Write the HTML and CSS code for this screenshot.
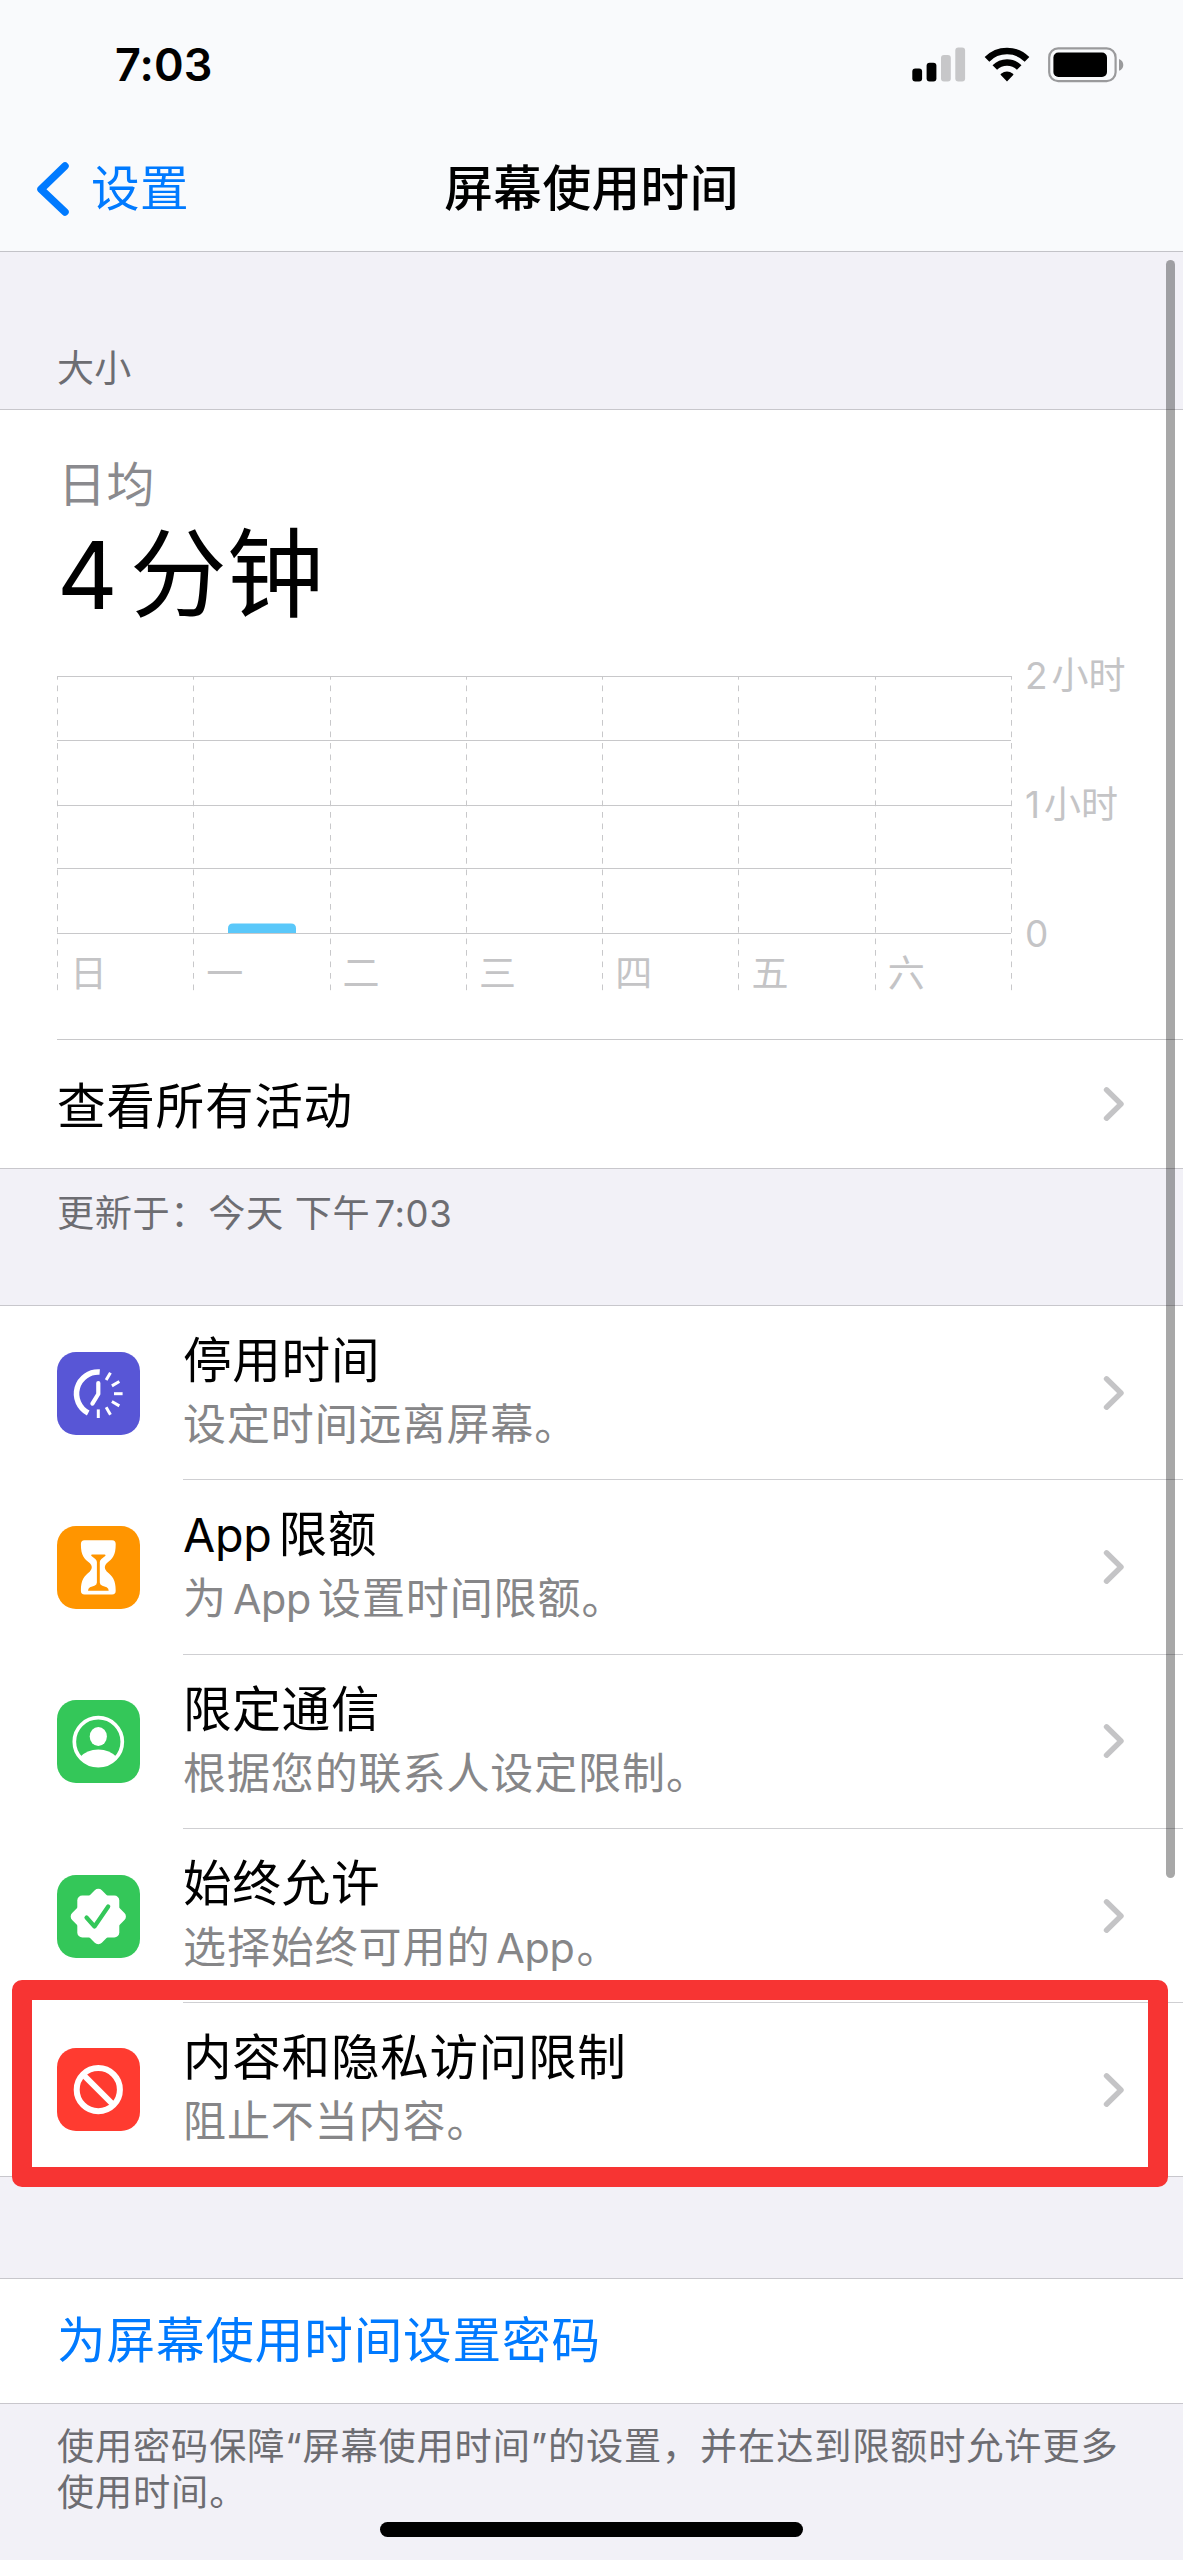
FILE: index.html
```html
<!DOCTYPE html>
<html lang="zh-CN">
<head>
<meta charset="utf-8">
<title>屏幕使用时间</title>
<link rel="stylesheet" href="styles.css">
</head>
<body>
<div class="screen">
  <header class="header">
    <div class="status">
      <span class="status-time">7:03</span>
      <div class="status-icons">
        <svg class="signal" width="54" height="35" viewBox="0 0 54 35">
          <rect x="0.3" y="21.5" width="9.8" height="13" rx="3"/>
          <rect x="14.6" y="15.8" width="9.8" height="18.7" rx="3"/>
          <rect class="off" x="29" y="8" width="9.8" height="26.5" rx="3"/>
          <rect class="off" x="43.3" y="0.5" width="9.8" height="34" rx="3"/>
        </svg>
        <svg class="wifi" width="46" height="35" viewBox="0 0 46 35">
          <path d="M3 12.3a28.2 28.2 0 0 1 40 0" fill="none" stroke="#000" stroke-width="6.6"/>
          <path d="M10.8 20.6a17.2 17.2 0 0 1 24.4 0" fill="none" stroke="#000" stroke-width="6.4"/>
          <path d="M23 34.6l-6.2-6.5q-.7-.8.2-1.4a10 10 0 0 1 12 0q.9.6.2 1.4z"/>
        </svg>
        <svg class="battery" width="76" height="36" viewBox="0 0 76 36">
          <rect x="1.2" y="1.4" width="66.4" height="32.8" rx="9" fill="none" stroke="#9a9a9c" stroke-width="2.2"/>
          <rect x="5.4" y="5.5" width="53.6" height="24.5" rx="5"/>
          <path d="M71 12c2.700 1 4.300 3.300 4.300 5.900s-1.600 4.900-4.300 5.900z" fill="#9a9a9c"/>
        </svg>
      </div>
    </div>
    <nav class="nav">
      <a class="back">
        <svg width="34" height="56" viewBox="0 0 34 56"><path d="M29 5L5 28.300l24 22.700" fill="none" stroke="currentColor" stroke-width="7.500" stroke-linecap="round" stroke-linejoin="round"/></svg>
        <span>设置</span>
      </a>
      <h1 class="title">屏幕使用时间</h1>
    </nav>
  </header>

  <main class="content">
    <h2 class="section-head">大小</h2>

    <section class="group">
      <div class="usage">
        <div class="usage-label">日均</div>
        <div class="usage-value"><span class="num">4</span>分钟</div>
        <div class="chart">
          <svg class="plot" width="956" height="316" viewBox="0 0 956 316">
            <path class="grid" d="M0 .5H954M0 64.500H954M0 129.500H954M0 192.500H954M0 257.500H954"/>
            <path class="dash" d="M.5 0V315M136.500 0V315M273.500 0V315M409.500 0V315M545.500 0V315M681.500 0V315M818.500 0V315M954.500 0V315"/>
            <path class="bar" d="M171 257v-4.500q0-5 5-5h58q5 0 5 5v4.500z"/>
          </svg>
          <div class="hours"><span><i>2</i>小时</span><span><i>1</i>小时</span><span>0</span></div>
          <div class="days"><span>日</span><span>一</span><span>二</span><span>三</span><span>四</span><span>五</span><span>六</span></div>
        </div>
      </div>
      <div class="row all">
        <span class="row-title">查看所有活动</span>
        <svg class="chevron" width="22" height="36" viewBox="0 0 22 36"><path d="M3.500 3.800L18 18 3.500 32.200"/></svg>
      </div>
    </section>
    <p class="note updated">更新于：今天 下午<span class="clock">7:03</span></p>

    <section class="group options">
      <div class="row option">
        <svg class="icon" viewBox="0 0 83 83">
          <rect width="83" height="83" rx="19" fill="#5856d6"/>
          <g fill="none" stroke="#fff">
            <path d="M42.700 20A21.700 21.700 0 0 0 31.200 60.900" stroke-width="5.600"/>
            <path d="M41.300 31v11l-5.900 9.600" stroke-width="4.200" stroke-linecap="round" stroke-linejoin="round"/>
            <g stroke-width="3">
              <path d="M41.300 17.400v8.600" transform="rotate(30 41.300 41.700)"/>
              <path d="M41.300 17.400v8.600" transform="rotate(60 41.300 41.700)"/>
              <path d="M41.300 17.400v8.600" transform="rotate(90 41.300 41.700)"/>
              <path d="M41.300 17.400v8.600" transform="rotate(120 41.300 41.700)"/>
              <path d="M41.300 17.400v8.600" transform="rotate(150 41.300 41.700)"/>
              <path d="M41.300 17.400v8.600" transform="rotate(180 41.300 41.700)"/>
            </g>
          </g>
        </svg>
        <div class="option-body">
          <div class="text"><div class="row-title">停用时间</div><div class="sub">设定时间远离屏幕。</div></div>
          <svg class="chevron" width="22" height="36" viewBox="0 0 22 36"><path d="M3.500 3.800L18 18 3.500 32.200"/></svg>
        </div>
      </div>
      <div class="row option">
        <svg class="icon" viewBox="0 0 83 83">
          <rect width="83" height="83" rx="19" fill="#ff9500"/>
          <path fill="#fff" d="M27.500 14.200h27.600q3.600 0 3.600 3.800c0 12-3.200 14.500-9 19.300q-4 4 0 8.300c5.800 4.900 9 8 9 19.200q0 3.800-3.600 3.800H27.500q-3.600 0-3.600-3.800c0-11.200 3.200-14.300 9-19.200q4-4.300 0-8.300c-5.800-4.800-9-7.300-9-19.300q0-3.800 3.600-3.800z"/>
          <path fill="#ff9500" d="M35 28.400h12.700q1.600.3.500 1.600l-3.800 3q-1.600 1.500-1.600 3v20.500q0 2.200 2.500 3.200l4.400 1.500q2 1 2 3.500H31q0-2.500 2-3.500l4.400-1.500q2.500-1 2.500-3.200V36q0-1.500-1.600-3l-3.800-3q-1.100-1.300.5-1.600z"/>
        </svg>
        <div class="option-body">
          <div class="text"><div class="row-title"><span class="app">App</span>限额</div><div class="sub">为<span class="app mid">App</span>设置时间限额。</div></div>
          <svg class="chevron" width="22" height="36" viewBox="0 0 22 36"><path d="M3.500 3.800L18 18 3.500 32.200"/></svg>
        </div>
      </div>
      <div class="row option">
        <svg class="icon" viewBox="0 0 83 83">
          <rect width="83" height="83" rx="19" fill="#34c759"/>
          <circle cx="41.300" cy="41.700" r="24" fill="none" stroke="#fff" stroke-width="3.700"/>
          <ellipse cx="41.300" cy="36.500" rx="8.600" ry="9.400" fill="#fff"/>
          <path fill="#fff" d="M22.500 57.500q7.500-7.900 18.800-7.900t18.800 7.900A24.600 24.600 0 0 1 22.500 57.500z"/>
        </svg>
        <div class="option-body">
          <div class="text"><div class="row-title">限定通信</div><div class="sub">根据您的联系人设定限制。</div></div>
          <svg class="chevron" width="22" height="36" viewBox="0 0 22 36"><path d="M3.500 3.800L18 18 3.500 32.200"/></svg>
        </div>
      </div>
      <div class="row option">
        <svg class="icon" viewBox="0 0 83 83">
          <rect width="83" height="83" rx="19" fill="#34c759"/>
          <g fill="#fff"><rect x="20.300" y="20.500" width="42" height="42" rx="5"/><rect x="20.300" y="20.500" width="42" height="42" rx="5" transform="rotate(45 41.300 41.500)"/></g>
          <path d="M29.500 42.500l8 9 13.700-20" fill="none" stroke="#34c759" stroke-width="4.200" stroke-linecap="round" stroke-linejoin="round"/>
        </svg>
        <div class="option-body">
          <div class="text"><div class="row-title">始终允许</div><div class="sub">选择始终可用的<span class="app mid end">App</span>。</div></div>
          <svg class="chevron" width="22" height="36" viewBox="0 0 22 36"><path d="M3.500 3.800L18 18 3.500 32.200"/></svg>
        </div>
      </div>
      <div class="row option">
        <svg class="icon" viewBox="0 0 83 83">
          <rect width="83" height="83" rx="19" fill="#ff3b30"/>
          <g fill="none" stroke="#fff" stroke-width="6"><circle cx="41.300" cy="41.700" r="21.600"/><path d="M26.500 27l29.500 29.500"/></g>
        </svg>
        <div class="option-body">
          <div class="text"><div class="row-title">内容和隐私访问限制</div><div class="sub">阻止不当内容。</div></div>
          <svg class="chevron" width="22" height="36" viewBox="0 0 22 36"><path d="M3.500 3.800L18 18 3.500 32.200"/></svg>
        </div>
        <div class="highlight"></div>
      </div>
    </section>

    <section class="group passcode"><a>为屏幕使用时间设置密码</a></section>
    <p class="note foot">使用密码保障“屏幕使用时间”的设置，并在达到限额时允许更多使用时间。</p>
  </main>
  <div class="scrollbar"></div>
  <div class="home"></div>
</div>
</body>
</html>
```
FILE: styles.css
```css
* { box-sizing: border-box; margin: 0; padding: 0; }

body {
  width: 1183px;
  background: #f2f1f7;
  color: #000;
  font-family: "Inter", "Noto Sans CJK SC", sans-serif;
}

.screen { position: relative; width: 1183px; height: 2560px; overflow: hidden; background: #f2f1f7; }

/* Header */
.header { height: 252px; background: #f9fafc; border-bottom: 1px solid #c3c3c8; }
.status { display: flex; justify-content: space-between; height: 126px; padding: 0 59px 0 115px; }
.status-time { margin-top: 35px; font-size: 45px; line-height: 60px; font-weight: 600; letter-spacing: 0.1px; }
.status-icons { display: flex; align-items: flex-start; padding-top: 47px; }
.status-icons svg { display: block; }
.signal .off { fill: #c7c7c9; }
.wifi { margin-left: 18px; }
.battery { margin-left: 18px; }
.nav { display: grid; grid-template-columns: 1fr auto 1fr; align-items: center; height: 125px; padding: 0 36px; }
.back { display: flex; align-items: center; gap: 21px; color: #007aff; font-size: 48.6px; line-height: 60px; letter-spacing: 0.3px; }
.title { padding-top: 1px; font-size: 48.6px; line-height: 60px; font-weight: 500; letter-spacing: 0.5px; }

/* Groups */
.section-head { height: 157px; padding: 92px 57px 0; color: #6d6d72; font-size: 37px; line-height: 50px; font-weight: 400; letter-spacing: 0.3px; }
.group { background: #fff; border-top: 1px solid #c8c7cc; border-bottom: 1px solid #c8c7cc; }
.note { padding: 0 57px; color: #6d6d72; font-size: 37.2px; letter-spacing: 0.6px; }
.row-title { font-size: 48.6px; line-height: 60px; letter-spacing: 0.7px; }

/* Usage summary */
.usage { height: 629px; padding-left: 57px; }
.usage-label { padding: 45px 0 0 1px; color: #8a8a8e; font-size: 48px; line-height: 60px; letter-spacing: 0.6px; }
.usage-value { height: 161px; font-size: 97px; line-height: 116px; padding-top: 1px; letter-spacing: 0; }
.usage-value .num { display: inline-block; margin-right: 12px; font-size: 94px; font-weight: 400; }
.chart { display: grid; grid-template-columns: 956px 1fr; grid-template-rows: 258px 58px; color: #c4c4c6; font-size: 37px; line-height: 40px; }
.plot { grid-area: 1 / 1 / 3 / 2; display: block; }
.grid { stroke: #c8c8ca; stroke-width: 1; fill: none; }
.dash { stroke: #c8c8ca; stroke-width: 1; stroke-dasharray: 5.700 5.800; stroke-dashoffset: 2; fill: none; }
.bar { fill: #5ac8fa; }
.hours { grid-area: 1 / 2; display: flex; flex-direction: column; justify-content: space-between; margin: -20px 0; padding-left: 12px; }
.hours i { font-style: normal; margin-right: 4px; }
.days { grid-area: 2 / 1; display: grid; grid-template-columns: repeat(7, 136.300px); padding: 20px 0 0 13px; }

.all { display: flex; align-items: center; justify-content: space-between; height: 129px; margin-left: 57px; padding: 0 58px 0 0; border-top: 1px solid #c8c8ca; }
.all .row-title { padding-top: 6px; }
.chevron { display: block; flex: none; fill: none; stroke: #c4c4c6; stroke-width: 5.400; stroke-linecap: round; stroke-linejoin: round; }
.updated { height: 136px; padding-top: 20px; line-height: 50px; }
.clock { margin-left: 4px; font-size: 36.500px; letter-spacing: 0.6px; }

/* Options */
.option { position: relative; display: flex; align-items: center; height: 174.300px; padding-left: 57px; }
.options .option:last-child { height: 173px; }
.icon { display: block; width: 83px; height: 83px; flex: none; }
.option-body { display: flex; align-items: center; justify-content: space-between; flex: 1; height: 100%; margin-left: 43px; padding-right: 58px; border-bottom: 1px solid #cfcfd2; }
.option:last-child .option-body { border-bottom: 0; }
.sub { margin-top: 3px; color: #868688; font-size: 43px; line-height: 60px; letter-spacing: 0.9px; }
.app { margin-right: 7px; font-size: 0.96em; letter-spacing: -0.3px; }
.mid { margin-left: 6px; }
.end { margin-right: 2px; }
.highlight { position: absolute; left: 12px; top: -23px; width: 1156px; height: 207px; border: 20px solid #f73433; border-radius: 10px; z-index: 2; }

.passcode { display: flex; align-items: center; height: 126px; margin-top: 101px; padding: 0 57px; color: #007aff; font-size: 48.6px; line-height: 60px; letter-spacing: 0.85px; }
.foot { padding-top: 20px; line-height: 46px; letter-spacing: 0.85px; }

/* Overlays */
.scrollbar { position: absolute; left: 1166px; top: 260px; width: 9px; height: 1618px; border-radius: 5px; background: rgba(0, 0, 0, 0.34); }
.home { position: absolute; left: 380px; top: 2522px; width: 423px; height: 15px; border-radius: 8px; background: #000; }
```
